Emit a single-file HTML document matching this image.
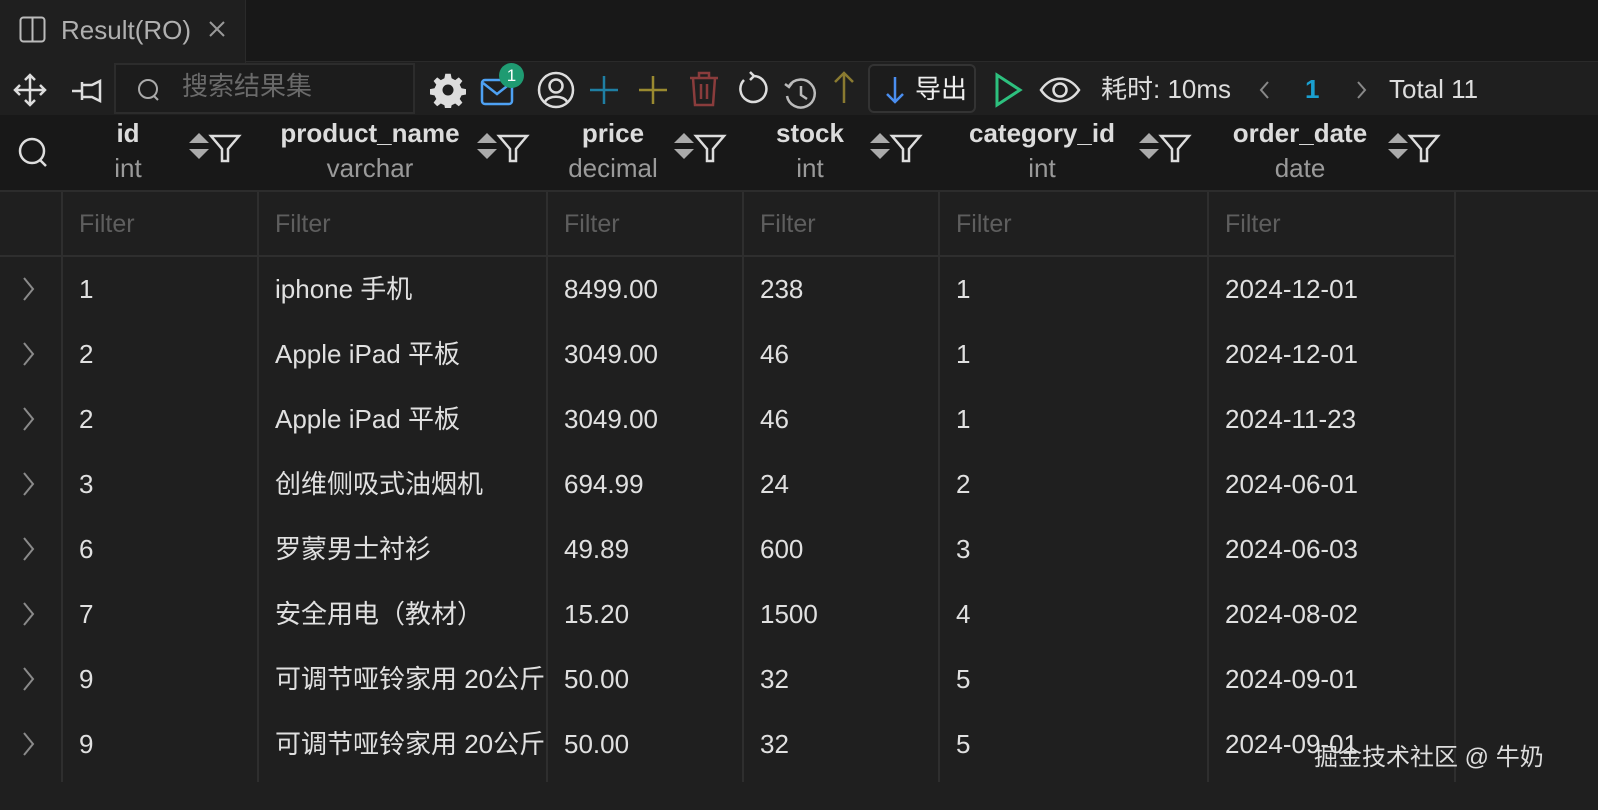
<!DOCTYPE html>
<html><head><meta charset="utf-8"><style>
*{margin:0;padding:0;box-sizing:border-box}
body{width:1598px;height:810px;background:#1f1f1f;font-family:"Liberation Sans","Noto Sans CJK SC",sans-serif;color:#e0e0e0;position:relative;overflow:hidden}
.a{position:absolute}
.tabbar{left:0;top:0;width:1598px;height:62px;background:#181818;border-bottom:1px solid #2a2a2a}
.tab{left:0;top:0;width:246px;height:63px;background:#1f1f1f;border-right:1px solid #2a2a2a}
.tb{left:0;top:63px;width:1598px;height:52px;background:#1f1f1f}
.hdr{left:0;top:115px;width:1598px;height:77px;background:#181818;border-bottom:2px solid #2c2c2c}
.t{font-size:26px;white-space:nowrap;line-height:36px}
.h1{font-size:26px;font-weight:bold;color:#dcdcdc;text-align:center;white-space:nowrap;line-height:36px}
.h2{font-size:26px;color:#9a9a9a;text-align:center;white-space:nowrap;line-height:36px}
.vl{width:2px;background:#2e2e2e}
.hl{height:2px;background:#2e2e2e}
.f{font-size:25px;color:#5e5e5e;line-height:36px}
</style></head><body>
<div class="a tabbar"></div>
<div class="a tab"></div>
<svg class="a" style="left:19px;top:16px" width="28" height="28"><rect x="1.5" y="1.5" width="24" height="24" rx="3" fill="none" stroke="#bbb" stroke-width="2"/><line x1="13.5" y1="2" x2="13.5" y2="26" stroke="#bbb" stroke-width="2"/></svg>
<div class="a t" style="left:61px;top:12px;color:#b0b0b0">Result(RO)</div>
<svg class="a" style="left:208px;top:20px" width="18" height="18" stroke="#999" stroke-width="2"><path d="M2 2l14 14M16 2L2 16"/></svg>
<div class="a tb"></div>
<svg class="a" style="left:12px;top:72px" width="36" height="36" stroke="#ddd" stroke-width="2.5" fill="none"><path d="M18 3v30M3 18h30M13 8l5-5 5 5M13 28l5 5 5-5M8 13l-5 5 5 5M28 13l5 5-5 5"/></svg>
<svg class="a" style="left:70px;top:76px" width="34" height="30" stroke="#ddd" stroke-width="2.5" fill="none"><path d="M2 15h10M12 6v18M12 9h10l8-4v20l-8-4H12"/></svg>
<div class="a" style="left:114px;top:63px;width:301px;height:51px;border:2px solid #2c2c2c;background:#1c1c1c"></div>
<svg class="a" style="left:136px;top:77px" width="26" height="26" stroke="#aaa" stroke-width="2" fill="none"><circle cx="12" cy="12" r="9"/><path d="M18 19l4 4"/></svg>
<div class="a t" style="left:182px;top:68px;color:#6a6a6a">搜索结果集</div>
<svg class="a" style="left:430px;top:72px" width="36" height="36"><path fill="#ddd" d="M15 3h6l1 5 4 2 4-3 4 4-3 4 2 4 5 1v6l-5 1-2 4 3 4-4 4-4-3-4 2-1 5h-6l-1-5-4-2-4 3-4-4 3-4-2-4-5-1v-6l5-1 2-4-3-4 4-4 4 3 4-2z" transform="scale(.9) translate(2 -1)"/><circle cx="18" cy="18" r="5.5" fill="#1f1f1f"/></svg>
<svg class="a" style="left:480px;top:74px" width="36" height="32"><rect x="2" y="6" width="30" height="24" rx="3" fill="none" stroke="#4ea1f3" stroke-width="2.5"/><path d="M3 9l14 11 14-11" fill="none" stroke="#4ea1f3" stroke-width="2.5"/></svg>
<div class="a" style="left:499px;top:63px;width:25px;height:25px;border-radius:50%;background:#1f9b72;color:#fff;font-size:17px;text-align:center;line-height:25px">1</div>
<svg class="a" style="left:536px;top:70px" width="40" height="40" stroke="#ddd" stroke-width="2.5" fill="none"><circle cx="20" cy="20" r="17"/><circle cx="20" cy="16" r="6.5"/><path d="M9 32c3-7 19-7 22 0"/></svg>
<svg class="a" style="left:586px;top:72px" width="36" height="36" stroke="#1f7fa3" stroke-width="2.5"><path d="M18 4v28M4 18h28"/></svg>
<svg class="a" style="left:635px;top:72px" width="36" height="36" stroke="#9a8a30" stroke-width="2.5"><path d="M18 4v28M4 18h28"/></svg>
<svg class="a" style="left:687px;top:70px" width="34" height="38" stroke="#8a3c3c" stroke-width="2.5" fill="none"><path d="M3 8h28M12 8V3h10v5M6 8l2 27h18l2-27M14 14v15M20 14v15"/></svg>
<svg class="a" style="left:734px;top:70px" width="36" height="38" stroke="#ddd" stroke-width="2.5" fill="none"><path d="M20 6a13 13 0 1 1-10 4M20 6l-4-4M20 6l-4 4"/></svg>
<svg class="a" style="left:783px;top:74px" width="36" height="38" stroke="#bbb" stroke-width="2.5" fill="none"><path d="M6 12a14 14 0 1 1-2 10M2 10l4 3 3-4M18 12v9l6 4"/></svg>
<svg class="a" style="left:830px;top:70px" width="28" height="36" stroke="#8a7a30" stroke-width="2.5" fill="none"><path d="M14 3v30M5 12l9-9 9 9"/></svg>
<div class="a" style="left:868px;top:64px;width:108px;height:49px;border:2px solid #333;border-radius:6px;background:#1c1c1c"></div>
<svg class="a" style="left:882px;top:74px" width="26" height="32" stroke="#4a8ef0" stroke-width="2.5" fill="none"><path d="M13 3v25M5 20l8 8 8-8"/></svg>
<div class="a t" style="left:915px;top:71px;color:#eee">导出</div>
<svg class="a" style="left:992px;top:72px" width="34" height="36" stroke="#2dc07e" stroke-width="3" fill="none"><path d="M5 3v30l23-15z"/></svg>
<svg class="a" style="left:1039px;top:74px" width="42" height="32" stroke="#ddd" stroke-width="2.5" fill="none"><path d="M2 16c10-15 28-15 38 0c-10 15-28 15-38 0z"/><circle cx="21" cy="16" r="6.5"/></svg>
<div class="a t" style="left:1101px;top:71px;color:#ddd">耗时: 10ms</div>
<svg class="a" style="left:1258px;top:80px" width="12" height="20" stroke="#888" stroke-width="2" fill="none"><path d="M10 2L3 10l7 8"/></svg>
<div class="a t" style="left:1305px;top:71px;color:#1a9fd0;font-weight:bold">1</div>
<svg class="a" style="left:1356px;top:80px" width="12" height="20" stroke="#888" stroke-width="2" fill="none"><path d="M2 2l7 8-7 8"/></svg>
<div class="a t" style="left:1389px;top:71px;color:#ddd">Total 11</div>
<div class="a hdr"></div>
<svg class="a" style="left:17px;top:136px" width="32" height="34" stroke="#ddd" stroke-width="2.5" fill="none"><circle cx="15" cy="15" r="12"/><path d="M23 24l6 6"/></svg>
<div class="a h1" style="left:78px;top:115px;width:100px">id</div><div class="a h2" style="left:78px;top:150px;width:100px">int</div>
<div class="a h1" style="left:270px;top:115px;width:200px">product_name</div><div class="a h2" style="left:270px;top:150px;width:200px">varchar</div>
<div class="a h1" style="left:553px;top:115px;width:120px">price</div><div class="a h2" style="left:553px;top:150px;width:120px">decimal</div>
<div class="a h1" style="left:750px;top:115px;width:120px">stock</div><div class="a h2" style="left:750px;top:150px;width:120px">int</div>
<div class="a h1" style="left:950px;top:115px;width:184px">category_id</div><div class="a h2" style="left:950px;top:150px;width:184px">int</div>
<div class="a h1" style="left:1220px;top:115px;width:160px">order_date</div><div class="a h2" style="left:1220px;top:150px;width:160px">date</div>
<svg class="a" style="left:0;top:130px" width="1598" height="36">
<defs><g id="sf"><path d="M0 13l10-10 10 10z" fill="#aaa"/><path d="M0 19l10 10 10-10z" fill="#aaa"/><path d="M22 6h28l-11 13v12h-6v-12z" fill="none" stroke="#ddd" stroke-width="2.5"/></g></defs>
<use href="#sf" x="189"/><use href="#sf" x="477"/><use href="#sf" x="674"/><use href="#sf" x="870"/><use href="#sf" x="1139"/><use href="#sf" x="1388"/>
</svg>
<div class="a vl" style="left:61px;top:192px;height:590px"></div>
<div class="a vl" style="left:257px;top:192px;height:590px"></div>
<div class="a vl" style="left:546px;top:192px;height:590px"></div>
<div class="a vl" style="left:742px;top:192px;height:590px"></div>
<div class="a vl" style="left:938px;top:192px;height:590px"></div>
<div class="a vl" style="left:1207px;top:192px;height:590px"></div>
<div class="a vl" style="left:1454px;top:192px;height:590px"></div>
<div class="a hl" style="left:0;top:255px;width:1456px"></div>
<div class="a f" style="left:79px;top:206px">Filter</div>
<div class="a f" style="left:275px;top:206px">Filter</div>
<div class="a f" style="left:564px;top:206px">Filter</div>
<div class="a f" style="left:760px;top:206px">Filter</div>
<div class="a f" style="left:956px;top:206px">Filter</div>
<div class="a f" style="left:1225px;top:206px">Filter</div>
<svg class="a" style="left:0;top:256px" width="60" height="530" stroke="#8a8a8a" stroke-width="2" fill="none">
<defs><path id="cv" d="M24 0l9 11-9 11"/></defs>
<use href="#cv" y="22"/><use href="#cv" y="87"/><use href="#cv" y="152"/><use href="#cv" y="217"/><use href="#cv" y="282"/><use href="#cv" y="347"/><use href="#cv" y="412"/><use href="#cv" y="477"/>
</svg>
<div class="a" style="left:0;top:271px;width:1456px">
<div style="position:relative;height:65px"><span class="a t" style="left:79px">1</span><span class="a t" style="left:275px">iphone 手机</span><span class="a t" style="left:564px">8499.00</span><span class="a t" style="left:760px">238</span><span class="a t" style="left:956px">1</span><span class="a t" style="left:1225px">2024-12-01</span></div>
<div style="position:relative;height:65px"><span class="a t" style="left:79px">2</span><span class="a t" style="left:275px">Apple iPad 平板</span><span class="a t" style="left:564px">3049.00</span><span class="a t" style="left:760px">46</span><span class="a t" style="left:956px">1</span><span class="a t" style="left:1225px">2024-12-01</span></div>
<div style="position:relative;height:65px"><span class="a t" style="left:79px">2</span><span class="a t" style="left:275px">Apple iPad 平板</span><span class="a t" style="left:564px">3049.00</span><span class="a t" style="left:760px">46</span><span class="a t" style="left:956px">1</span><span class="a t" style="left:1225px">2024-11-23</span></div>
<div style="position:relative;height:65px"><span class="a t" style="left:79px">3</span><span class="a t" style="left:275px">创维侧吸式油烟机</span><span class="a t" style="left:564px">694.99</span><span class="a t" style="left:760px">24</span><span class="a t" style="left:956px">2</span><span class="a t" style="left:1225px">2024-06-01</span></div>
<div style="position:relative;height:65px"><span class="a t" style="left:79px">6</span><span class="a t" style="left:275px">罗蒙男士衬衫</span><span class="a t" style="left:564px">49.89</span><span class="a t" style="left:760px">600</span><span class="a t" style="left:956px">3</span><span class="a t" style="left:1225px">2024-06-03</span></div>
<div style="position:relative;height:65px"><span class="a t" style="left:79px">7</span><span class="a t" style="left:275px">安全用电（教材）</span><span class="a t" style="left:564px">15.20</span><span class="a t" style="left:760px">1500</span><span class="a t" style="left:956px">4</span><span class="a t" style="left:1225px">2024-08-02</span></div>
<div style="position:relative;height:65px"><span class="a t" style="left:79px">9</span><span class="a t" style="left:275px;width:270px;overflow:hidden">可调节哑铃家用 20公斤</span><span class="a t" style="left:564px">50.00</span><span class="a t" style="left:760px">32</span><span class="a t" style="left:956px">5</span><span class="a t" style="left:1225px">2024-09-01</span></div>
<div style="position:relative;height:65px"><span class="a t" style="left:79px">9</span><span class="a t" style="left:275px;width:270px;overflow:hidden">可调节哑铃家用 20公斤</span><span class="a t" style="left:564px">50.00</span><span class="a t" style="left:760px">32</span><span class="a t" style="left:956px">5</span><span class="a t" style="left:1225px">2024-09-01</span></div>
</div>
<div class="a" style="left:1314px;top:741px;font-size:24px;line-height:34px;color:#ddd;white-space:nowrap">掘金技术社区 @ 牛奶</div>
</body></html>
